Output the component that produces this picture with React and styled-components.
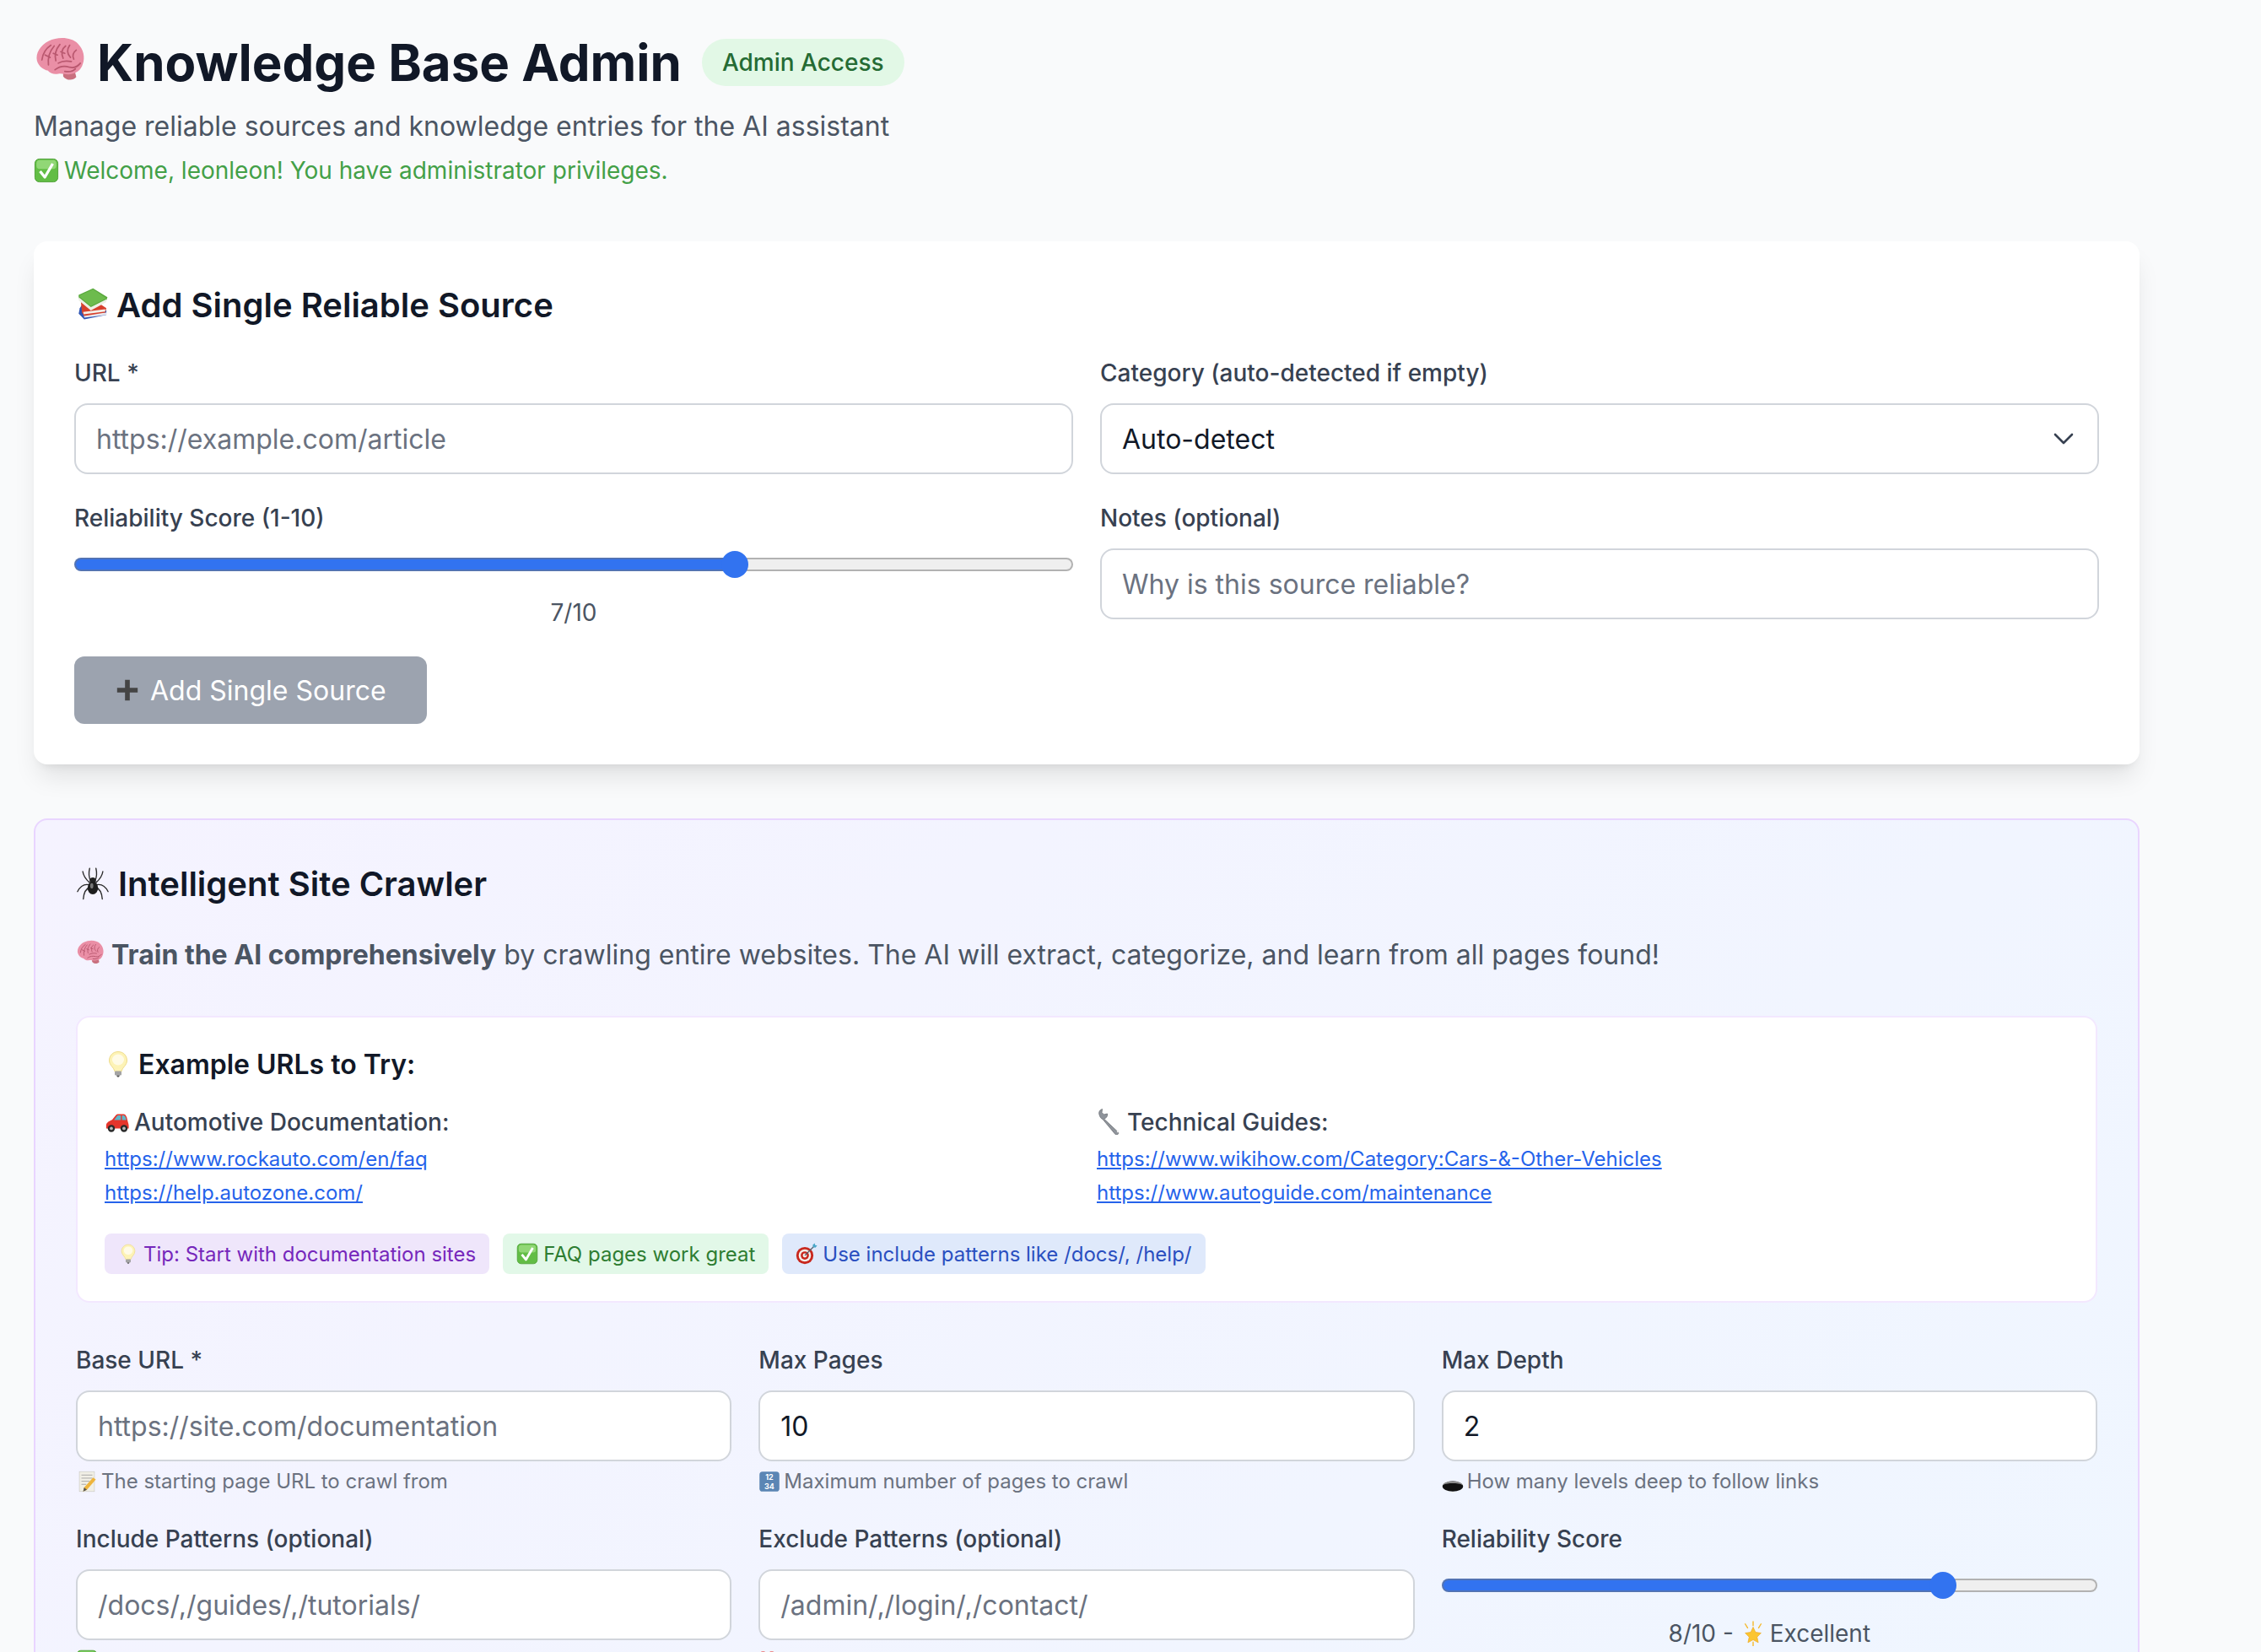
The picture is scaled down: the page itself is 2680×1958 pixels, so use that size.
import React from 'react'
import styled, { createGlobalStyle } from 'styled-components'

const GlobalStyle = createGlobalStyle`
  * { box-sizing: border-box; }
  html, body {
    margin: 0;
    height: 1958px;
    overflow: hidden;
    background: #f9fafb;
    font-family: Inter, "Noto Sans", sans-serif;
    color: #111827;
  }
`

const Page = styled.div`
  width: 2576px;
  padding: 40px;
`
const Header = styled.header`
  margin-bottom: 64px;
`
const TitleRow = styled.div`
  display: flex;
  align-items: center;
  gap: 24px;
  height: 68px;
  margin-bottom: 18px;
`
const Title = styled.h1`
  margin: 0;
  font-size: 60px;
  line-height: 68px;
  font-weight: 700;
  color: #111827;
  white-space: nowrap;
`
const Badge = styled.span`
  display: inline-flex;
  align-items: center;
  height: 56px;
  padding: 0 24px;
  border-radius: 28px;
  background: #e2f8e6;
  color: #256b34;
  font-size: 28px;
  font-weight: 500;
`
const Subtitle = styled.p`
  margin: 0;
  font-size: 32px;
  line-height: 48px;
  color: #4b5563;
`
const Welcome = styled.p`
  margin: 8px 0 0;
  font-size: 28px;
  line-height: 40px;
  color: #43a047;
`
const Card = styled.section`
  background: #fff;
  border-radius: 16px;
  padding: 48px;
  margin-bottom: 64px;
  box-shadow: 0 20px 30px -6px rgba(0, 0, 0, 0.1), 0 8px 12px -8px rgba(0, 0, 0, 0.1);
`
const CrawlerCard = styled.section`
  background: linear-gradient(135deg, #f5f3ff, #eff6ff);
  border: 2px solid #e9d5ff;
  border-radius: 16px;
  padding: 48px;
`
const CardTitle = styled.h2`
  margin: 0 0 32px;
  font-size: 40px;
  line-height: 56px;
  font-weight: 600;
  color: #111827;
`
const Intro = styled.p`
  margin: 0 0 48px;
  font-size: 32px;
  line-height: 48px;
  color: #4b5563;

  strong {
    font-weight: 700;
  }
`
const TwoCols = styled.div`
  display: grid;
  grid-template-columns: 1fr 1fr;
  gap: 32px;
  margin-bottom: 32px;
`
const ThreeCols = styled.div`
  display: grid;
  grid-template-columns: repeat(3, 1fr);
  gap: 32px;
`
const Field = styled.div`
  display: flex;
  flex-direction: column;
  min-width: 0;
`
const Label = styled.label`
  font-size: 28px;
  line-height: 40px;
  font-weight: 500;
  color: #374151;
  margin-bottom: 16px;
`
const Input = styled.input`
  width: 100%;
  height: 84px;
  padding: 0 24px;
  border: 2px solid #d1d5db;
  border-radius: 16px;
  background: #fff;
  font-family: inherit;
  font-size: 32px;
  color: #111827;
  appearance: textfield;

  &::placeholder {
    color: #6b7280;
    opacity: 1;
  }
`
const SelectWrap = styled.div`
  position: relative;
`
const Select = styled.select`
  width: 100%;
  height: 84px;
  padding: 0 24px;
  border: 2px solid #d1d5db;
  border-radius: 16px;
  background: #fff;
  font-family: inherit;
  font-size: 32px;
  color: #111827;
  appearance: none;
`
const Chevron = styled.svg`
  position: absolute;
  right: 30px;
  top: 30px;
  width: 24px;
  height: 24px;
  pointer-events: none;
`
const Range = styled.input`
  appearance: none;
  display: block;
  width: 100%;
  height: 32px;
  margin: 3px 0 0;
  background: transparent;

  &::-webkit-slider-runnable-track {
    height: 16px;
    border: 2px solid transparent;
    border-radius: 8px;
    background:
      linear-gradient(to right, #3273f0 ${(p) => p.$stop}, #efefef ${(p) => p.$stop}) padding-box,
      linear-gradient(to right, #5273b4 ${(p) => p.$stop}, #b2b2b2 ${(p) => p.$stop}) border-box;
  }
  &::-webkit-slider-thumb {
    appearance: none;
    width: 32px;
    height: 32px;
    margin-top: -10px;
    border-radius: 50%;
    background: #3273f0;
  }
`
const RangeValue = styled.div`
  margin-top: 21px;
  text-align: center;
  font-size: 28px;
  line-height: 40px;
  color: #4b5563;
`
const SubmitButton = styled.button`
  display: flex;
  align-items: center;
  gap: 12px;
  height: 80px;
  padding: 0 48px;
  border: none;
  border-radius: 12px;
  background: #9ca3af;
  color: #fff;
  font-family: inherit;
  font-size: 32px;
  font-weight: 400;
`
const ExampleBox = styled.div`
  background: #fff;
  border: 2px solid #f3e8ff;
  border-radius: 16px;
  padding: 32px;
  margin-bottom: 48px;
`
const ExampleTitle = styled.h3`
  margin: 0 0 24px;
  font-size: 32px;
  line-height: 48px;
  font-weight: 600;
  color: #111827;
`
const ExampleGrid = styled.div`
  display: grid;
  grid-template-columns: 1fr 1fr;
  gap: 24px;
  margin-bottom: 28px;
`
const GroupName = styled.div`
  font-size: 28px;
  line-height: 40px;
  font-weight: 500;
  color: #374151;
  margin-bottom: 4px;
`
const ExampleLink = styled.a`
  display: block;
  font-size: 24px;
  line-height: 40px;
  color: #2563eb;
  text-decoration: underline;
`
const ChipRow = styled.div`
  display: flex;
  gap: 16px;
`
const chipColors = {
  purple: ['#efe6fb', '#7627bb'],
  green: ['#e2f8e8', '#2e7d32'],
  blue: ['#dfe9fb', '#2a4fc0'],
}
const Chip = styled.span`
  display: inline-flex;
  align-items: center;
  height: 48px;
  padding: 0 16px;
  border-radius: 8px;
  font-size: 24px;
  background: ${(p) => chipColors[p.$tone][0]};
  color: ${(p) => chipColors[p.$tone][1]};
`
const Hint = styled.div`
  margin-top: 8px;
  font-size: 24px;
  line-height: 32px;
  color: #6b7280;
`
const Icon = styled.svg`
  display: inline-block;
  width: ${(p) => p.$size}px;
  height: ${(p) => p.$size}px;
  margin-right: ${(p) => p.$gap ?? 8}px;
  vertical-align: ${(p) => p.$drop ?? -4}px;
`

const emojiShapes = {
  brain: (
    <>
      <path d="M36 52c3 5 12 6 16 1l-2-8H36z" fill="#c9707f" />
      <path d="M4 33C2 24 8 14 18 9c12-6 28-5 36 3 7 7 9 17 6 25-2 7-7 11-13 12-6 2-11-1-17 0-5 1-9 0-13-4-5-1-11-5-13-12z" fill="#ea8fa6" />
      <path d="M10 32c1-8 5-14 11-18M18 38c-1-9 1-16 7-23M27 33c-2-8 0-14 5-20M36 30c-3-7-1-12 3-15M44 14c-4 6-3 11 1 15M52 20c-4 3-5 7-3 11M14 26l6 3M24 24l5 2M33 22l5 2M26 44c5-4 12-5 18-3 5 1 10-1 13-5M30 36c5-3 11-3 16-2M38 46c5 1 10 0 13-3" fill="none" stroke="#b9586f" strokeWidth="1.8" strokeLinecap="round" />
    </>
  ),
  books: (
    <>
      <path d="M10 40l4-6 44 10v8L18 60 8 50z" fill="#2f55b5" />
      <path d="M17 49l41-1v4l-40 5z" fill="#e8e8ee" />
      <path d="M12 28l34 4 12 8-2 8-38 6-4-6z" fill="#d8402c" />
      <path d="M16 47l40-5v4l-39 5z" fill="#f3efe8" />
      <path d="M8 16L34 4l26 16-2 6-28 16L8 22z" fill="#58a83c" />
      <path d="M8 20v6l22 18 28-15v-5L30 38z" fill="#eef0e6" />
      <path d="M8 18l22 18 28-14L34 6z" fill="#6dbb4d" />
    </>
  ),
  check: (
    <>
      <rect x="3" y="3" width="58" height="58" rx="11" fill="#62bd45" stroke="#4c9f34" strokeWidth="2" />
      <rect x="7" y="6" width="50" height="22" rx="8" fill="#a5e38c" opacity="0.7" />
      <path d="M16 34l12 15 20-34" fill="none" stroke="#fff" strokeWidth="7" strokeLinejoin="round" />
    </>
  ),
  spider: (
    <>
      <g fill="none" stroke="#2b2b2b" strokeWidth="2.2" strokeLinecap="round">
        <path d="M28 26C24 18 24 10 26 2M36 26c4-8 4-16 2-24" />
        <path d="M26 29C18 22 14 16 13 8M38 29c8-7 12-13 13-21" />
        <path d="M25 33C15 31 8 36 3 46M39 33c10-2 17 3 22 13" />
        <path d="M27 38c-8 2-12 10-13 22M37 38c8 2 12 10 13 22" />
      </g>
      <ellipse cx="32" cy="25" rx="6" ry="6" fill="#222" />
      <ellipse cx="32" cy="39" rx="10" ry="12" fill="#1d1d1d" />
      <ellipse cx="30" cy="35" rx="3" ry="5" fill="#777" />
    </>
  ),
  bulb: (
    <>
      <path d="M32 3C19 3 11 13 11 24c0 11 11 16 13 26h16c2-10 13-15 13-26C53 13 45 3 32 3z" fill="#fdf3b6" stroke="#efdc8b" strokeWidth="2" />
      <ellipse cx="32" cy="22" rx="14" ry="13" fill="#fffbe6" />
      <rect x="24" y="49" width="16" height="10" rx="2" fill="#a4a4a4" />
      <path d="M28 59h8l-2 4h-4z" fill="#555" />
    </>
  ),
  car: (
    <>
      <path d="M4 42c0-7 8-11 15-14l9-11c2-2 4-3 7-3h13c4 0 6 3 8 8l3 12c1 3 2 6 2 10v6H4z" fill="#e5352b" />
      <path d="M24 29l7-10c1-1 2-2 4-2h6v12zM44 17h4c2 0 4 2 5 5l2 7H44z" fill="#5fb6c9" />
      <circle cx="17" cy="50" r="9" fill="#2a2a2a" />
      <circle cx="17" cy="50" r="4" fill="#b8b8b8" />
      <circle cx="49" cy="50" r="9" fill="#2a2a2a" />
      <circle cx="49" cy="50" r="4" fill="#b8b8b8" />
    </>
  ),
  wrench: (
    <>
      <path d="M6 16c-2-6 1-11 7-13l-1 8 5 5 8-2c1 6-2 11-8 12l33 31c2 2 2 4 0 6-2 2-4 2-6 0L14 27C10 26 7 21 6 16z" fill="#8f949b" stroke="#686c72" strokeWidth="1.5" />
      <circle cx="50" cy="56" r="2.5" fill="#eee" />
    </>
  ),
  target: (
    <>
      <circle cx="27" cy="37" r="25" fill="#c8281e" />
      <circle cx="27" cy="37" r="18" fill="#f4f0ea" />
      <circle cx="27" cy="37" r="12" fill="#c8281e" />
      <circle cx="27" cy="37" r="6" fill="#f4f0ea" />
      <path d="M27 37L56 8" stroke="#56606a" strokeWidth="3" />
      <path d="M50 6l6-5 1 6 6 1-5 6-7-1z" fill="#4aa7c9" />
    </>
  ),
  memo: (
    <>
      <rect x="10" y="3" width="44" height="58" fill="#f1efe6" stroke="#c8c8c0" strokeWidth="1.5" />
      <path d="M16 13h32M16 22h32M16 31h24M16 40h14" stroke="#9a9a9a" strokeWidth="2" />
      <path d="M50 20l8 6-26 30-11 5 3-12z" fill="#eeb43c" />
      <path d="M21 61l3-12 8 7z" fill="#555" />
    </>
  ),
  numbers: (
    <>
      <rect x="3" y="3" width="58" height="58" rx="9" fill="#5b86b4" />
      <text x="32" y="28" textAnchor="middle" fontSize="22" fontWeight="700" fill="#fff" fontFamily="Inter">12</text>
      <text x="32" y="54" textAnchor="middle" fontSize="22" fontWeight="700" fill="#fff" fontFamily="Inter">34</text>
    </>
  ),
  hole: (
    <>
      <ellipse cx="32" cy="46" rx="30" ry="15" fill="#111" />
      <path d="M3 42c4-7 14-11 29-11s25 4 29 11c-8-4-18-5-29-5s-21 1-29 5z" fill="#8b8b8b" />
    </>
  ),
  star: (
    <>
      <path d="M32 16l6 13 14 2-10 10 3 14-13-7-13 7 3-14-10-10 14-2z" fill="#fbc531" stroke="#eea821" strokeWidth="1.5" />
      <path d="M32 2v10M12 8l6 10M52 8l-6 10M32 54v10" stroke="#f5b92d" strokeWidth="3" strokeLinecap="round" />
    </>
  ),
  nope: (
    <>
      <path d="M8 6l12 20L8 62h10l8-24 8 24h10L32 26 44 6H34l-8 14-8-14z" fill="#e5281e" />
    </>
  ),
  plus: <path d="M26 6h12v20h20v12H38v20H26V38H6V26h20z" fill="#444" />,
}

const Emoji = ({ name, size, gap, drop }) => (
  <Icon viewBox="0 0 64 64" $size={size} $gap={gap} $drop={drop} aria-hidden="true">
    {emojiShapes[name]}
  </Icon>
)

const Slider = ({ value }) => {
  const frac = (value - 1) / 9
  return (
    <Range
      type="range"
      min="1"
      max="10"
      defaultValue={value}
      $stop={`calc(16px + (100% - 32px) * ${frac})`}
    />
  )
}

const App = () => {
  return (
    <Page>
      <GlobalStyle />
      <Header>
        <TitleRow>
          <Title>
            <Emoji name="brain" size={62} gap={13} drop={-6} />
            Knowledge Base Admin
          </Title>
          <Badge>Admin Access</Badge>
        </TitleRow>
        <Subtitle>Manage reliable sources and knowledge entries for the AI assistant</Subtitle>
        <Welcome>
          <Emoji name="check" size={30} gap={6} drop={-5} />
          Welcome, leonleon! You have administrator privileges.
        </Welcome>
      </Header>

      <Card>
        <CardTitle>
          <Emoji name="books" size={42} gap={8} drop={-5} />
          Add Single Reliable Source
        </CardTitle>
        <TwoCols>
          <Field>
            <Label>URL *</Label>
            <Input placeholder="https://example.com/article" />
          </Field>
          <Field>
            <Label>Category (auto-detected if empty)</Label>
            <SelectWrap>
              <Select defaultValue="">
                <option value="">Auto-detect</option>
              </Select>
              <Chevron viewBox="0 0 24 24" fill="none" stroke="#374151" strokeWidth="2.6" strokeLinecap="round" strokeLinejoin="round">
                <path d="M2 7l10 10L22 7" />
              </Chevron>
            </SelectWrap>
          </Field>
          <Field>
            <Label>Reliability Score (1-10)</Label>
            <Slider value={7} />
            <RangeValue>7/10</RangeValue>
          </Field>
          <Field>
            <Label>Notes (optional)</Label>
            <Input placeholder="Why is this source reliable?" />
          </Field>
        </TwoCols>
        <SubmitButton>
          <Emoji name="plus" size={30} gap={0} drop={0} />
          Add Single Source
        </SubmitButton>
      </Card>

      <CrawlerCard>
        <CardTitle>
          <Emoji name="spider" size={40} gap={10} drop={-6} />
          Intelligent Site Crawler
        </CardTitle>
        <Intro>
          <Emoji name="brain" size={34} gap={8} drop={-3} />
          <strong>Train the AI comprehensively</strong> by crawling entire websites. The AI will extract, categorize, and learn from all pages found!
        </Intro>

        <ExampleBox>
          <ExampleTitle>
            <Emoji name="bulb" size={32} gap={8} drop={-4} />
            Example URLs to Try:
          </ExampleTitle>
          <ExampleGrid>
            <div>
              <GroupName>
                <Emoji name="car" size={30} gap={5} drop={-4} />
                Automotive Documentation:
              </GroupName>
              <ExampleLink href="#">https://www.rockauto.com/en/faq</ExampleLink>
              <ExampleLink href="#">https://help.autozone.com/</ExampleLink>
            </div>
            <div>
              <GroupName>
                <Emoji name="wrench" size={32} gap={4} drop={-5} />
                Technical Guides:
              </GroupName>
              <ExampleLink href="#">https://www.wikihow.com/Category:Cars-&amp;-Other-Vehicles</ExampleLink>
              <ExampleLink href="#">https://www.autoguide.com/maintenance</ExampleLink>
            </div>
          </ExampleGrid>
          <ChipRow>
            <Chip $tone="purple">
              <Emoji name="bulb" size={24} gap={6} drop={0} />
              Tip: Start with documentation sites
            </Chip>
            <Chip $tone="green">
              <Emoji name="check" size={26} gap={6} drop={0} />
              FAQ pages work great
            </Chip>
            <Chip $tone="blue">
              <Emoji name="target" size={26} gap={6} drop={0} />
              Use include patterns like /docs/, /help/
            </Chip>
          </ChipRow>
        </ExampleBox>

        <ThreeCols>
          <Field>
            <Label>Base URL *</Label>
            <Input placeholder="https://site.com/documentation" />
            <Hint>
              <Emoji name="memo" size={26} gap={4} drop={-5} />
              The starting page URL to crawl from
            </Hint>
          </Field>
          <Field>
            <Label>Max Pages</Label>
            <Input type="number" defaultValue="10" />
            <Hint>
              <Emoji name="numbers" size={26} gap={4} drop={-5} />
              Maximum number of pages to crawl
            </Hint>
          </Field>
          <Field>
            <Label>Max Depth</Label>
            <Input type="number" defaultValue="2" />
            <Hint>
              <Emoji name="hole" size={26} gap={4} drop={-5} />
              How many levels deep to follow links
            </Hint>
          </Field>
          <Field>
            <Label>Include Patterns (optional)</Label>
            <Input placeholder="/docs/,/guides/,/tutorials/" />
            <Hint>
              <Emoji name="check" size={26} gap={4} drop={-5} />
              Only crawl URLs containing these
            </Hint>
          </Field>
          <Field>
            <Label>Exclude Patterns (optional)</Label>
            <Input placeholder="/admin/,/login/,/contact/" />
            <Hint>
              <Emoji name="nope" size={26} gap={4} drop={-5} />
              Skip URLs containing these
            </Hint>
          </Field>
          <Field>
            <Label>Reliability Score</Label>
            <Slider value={8} />
            <RangeValue>
              8/10 - <Emoji name="star" size={30} gap={5} drop={-5} />
              Excellent
            </RangeValue>
          </Field>
        </ThreeCols>
      </CrawlerCard>
    </Page>
  )
}

export default App
